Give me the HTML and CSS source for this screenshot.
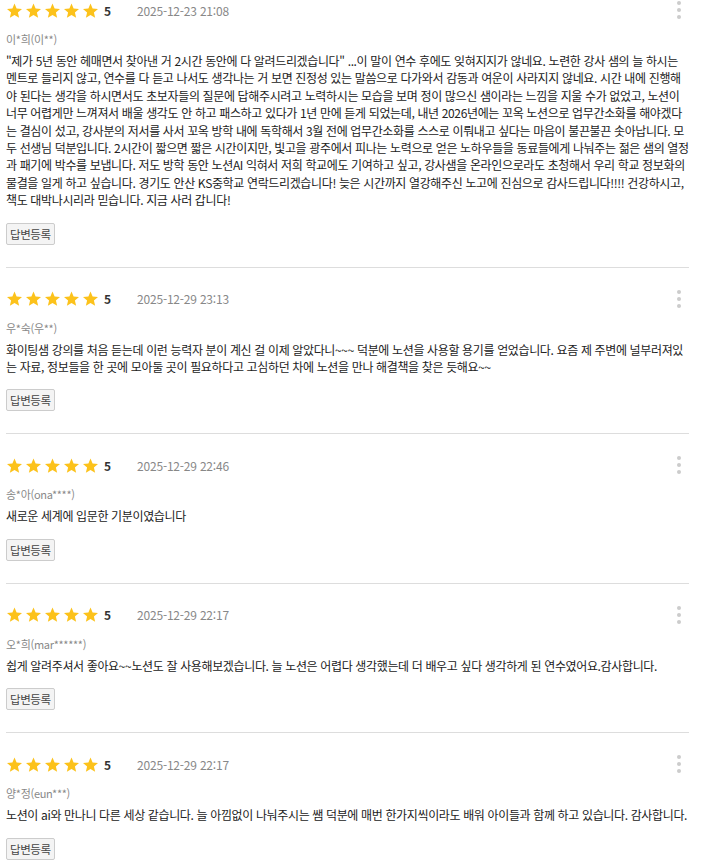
FILE: index.html
```html
<!DOCTYPE html>
<html lang="ko">
<head>
<meta charset="utf-8">
<title>수강후기</title>
<link rel="stylesheet" href="styles.css">
</head>
<body>
<svg width="0" height="0" class="defs" aria-hidden="true">
  <defs>
    <symbol id="star" viewBox="2 1.6 20 19.6">
      <path d="M12 17.27L18.18 21l-1.64-7.03L22 9.24l-7.19-.61L12 2 9.19 8.63 2 9.24l5.46 4.73L5.82 21z"/>
    </symbol>
  </defs>
</svg>
<ul class="reviews">
  <li class="review">
    <div class="head">
      <span class="stars"><svg><use href="#star"/></svg><svg><use href="#star"/></svg><svg><use href="#star"/></svg><svg><use href="#star"/></svg><svg><use href="#star"/></svg></span>
      <span class="score">5</span>
      <span class="date">2025-12-23 21:08</span>
      <span class="kebab"><i></i><i></i><i></i></span>
    </div>
    <div class="name">이*희(이**)</div>
    <p class="text">"제가 5년 동안 헤매면서 찾아낸 거 2시간 동안에 다 알려드리겠습니다" ...이 말이 연수 후에도 잊혀지지가 않네요. 노련한 강사 샘의 늘 하시는 멘트로 들리지 않고, 연수를 다 듣고 나서도 생각나는 거 보면 진정성 있는 말씀으로 다가와서 감동과 여운이 사라지지 않네요. 시간 내에 진행해야 된다는 생각을 하시면서도 초보자들의 질문에 답해주시려고 노력하시는 모습을 보며 정이 많으신 샘이라는 느낌을 지울 수가 없었고, 노션이 너무 어렵게만 느껴져서 배울 생각도 안 하고 패스하고 있다가 1년 만에 듣게 되었는데, 내년 2026년에는 꼬옥 노션으로 업무간소화를 해야겠다는 결심이 섰고, 강사분의 저서를 사서 꼬옥 방학 내에 독학해서 3월 전에 업무간소화를 스스로 이뤄내고 싶다는 마음이 불끈불끈 솟아납니다. 모두 선생님 덕분입니다. 2시간이 짧으면 짧은 시간이지만, 빛고을 광주에서 피나는 노력으로 얻은 노하우들을 동료들에게 나눠주는 젊은 샘의 열정과 패기에 박수를 보냅니다. 저도 방학 동안 노션AI 익혀서 저희 학교에도 기여하고 싶고, 강사샘을 온라인으로라도 초청해서 우리 학교 정보화의 물결을 일게 하고 싶습니다. 경기도 안산 KS중학교 연락드리겠습니다! 늦은 시간까지 열강해주신 노고에 진심으로 감사드립니다!!!! 건강하시고, 책도 대박나시리라 믿습니다. 지금 사러 갑니다!</p>
    <button class="reply" type="button">답변등록</button>
  </li>
  <li class="review">
    <div class="head">
      <span class="stars"><svg><use href="#star"/></svg><svg><use href="#star"/></svg><svg><use href="#star"/></svg><svg><use href="#star"/></svg><svg><use href="#star"/></svg></span>
      <span class="score">5</span>
      <span class="date">2025-12-29 23:13</span>
      <span class="kebab"><i></i><i></i><i></i></span>
    </div>
    <div class="name">우*숙(우**)</div>
    <p class="text">화이팅샘 강의를 처음 듣는데 이런 능력자 분이 계신 걸 이제 알았다니~~~ 덕분에 노션을 사용할 용기를 얻었습니다. 요즘 제 주변에 널부러져있는 자료, 정보들을 한 곳에 모아둘 곳이 필요하다고 고심하던 차에 노션을 만나 해결책을 찾은 듯해요~~</p>
    <button class="reply" type="button">답변등록</button>
  </li>
  <li class="review">
    <div class="head">
      <span class="stars"><svg><use href="#star"/></svg><svg><use href="#star"/></svg><svg><use href="#star"/></svg><svg><use href="#star"/></svg><svg><use href="#star"/></svg></span>
      <span class="score">5</span>
      <span class="date">2025-12-29 22:46</span>
      <span class="kebab"><i></i><i></i><i></i></span>
    </div>
    <div class="name">송*아(ona****)</div>
    <p class="text">새로운 세계에 입문한 기분이였습니다</p>
    <button class="reply" type="button">답변등록</button>
  </li>
  <li class="review">
    <div class="head">
      <span class="stars"><svg><use href="#star"/></svg><svg><use href="#star"/></svg><svg><use href="#star"/></svg><svg><use href="#star"/></svg><svg><use href="#star"/></svg></span>
      <span class="score">5</span>
      <span class="date">2025-12-29 22:17</span>
      <span class="kebab"><i></i><i></i><i></i></span>
    </div>
    <div class="name">오*희(mar******)</div>
    <p class="text">쉽게 알려주셔서 좋아요~~노션도 잘 사용해보겠습니다. 늘 노션은 어렵다 생각했는데 더 배우고 싶다 생각하게 된 연수였어요.감사합니다.</p>
    <button class="reply" type="button">답변등록</button>
  </li>
  <li class="review">
    <div class="head">
      <span class="stars"><svg><use href="#star"/></svg><svg><use href="#star"/></svg><svg><use href="#star"/></svg><svg><use href="#star"/></svg><svg><use href="#star"/></svg></span>
      <span class="score">5</span>
      <span class="date">2025-12-29 22:17</span>
      <span class="kebab"><i></i><i></i><i></i></span>
    </div>
    <div class="name">양*정(eun***)</div>
    <p class="text">노션이 ai와 만나니 다른 세상 같습니다. 늘 아낌없이 나눠주시는 쌤 덕분에 매번 한가지씩이라도 배워 아이들과 함께 하고 있습니다. 감사합니다.</p>
    <button class="reply" type="button">답변등록</button>
  </li>
</ul>
</body>
</html>
```
FILE: styles.css
```css
html, body {
  margin: 0;
  padding: 0;
  background: #fff;
}
body {
  font-family: "Noto Sans CJK KR", "Noto Sans", sans-serif;
  font-size: 12px;
  color: #222;
}
.defs {
  position: absolute;
  width: 0;
  height: 0;
  overflow: hidden;
}
.reviews {
  list-style: none;
  margin: 0 0 0 6px;
  padding: 0;
  width: 683px;
}
.review {
  padding: 21px 0 22px;
  border-bottom: 1px solid #ddd;
}
.review:first-child {
  padding-top: 0;
}
.head {
  display: flex;
  align-items: center;
  height: 20px;
}
.stars {
  display: flex;
  gap: 4px;
  margin-left: 1px;
}
.stars svg {
  width: 15px;
  height: 15px;
  fill: #fcc21b;
  display: block;
}
.score {
  margin-left: 6px;
  font-weight: bold;
  color: #333;
  font-size: 12px;
}
.date {
  margin-left: 26px;
  color: #888;
  font-size: 12px;
  letter-spacing: -0.2px;
}
.kebab {
  margin-left: auto;
  margin-right: 8px;
  display: flex;
  flex-direction: column;
  gap: 3px;
}
.kebab i {
  display: block;
  width: 4px;
  height: 4px;
  border-radius: 50%;
  background: #ccc;
}
.name {
  margin-top: 10px;
  font-size: 11px;
  line-height: 18px;
  color: #888;
  letter-spacing: -0.3px;
}
.text {
  margin: 4px 0 0;
  line-height: 17.4px;
  color: #222;
  letter-spacing: -0.36px;
}
.reply {
  display: block;
  margin-top: 14px;
  height: 22px;
  padding: 0 3px;
  font-family: inherit;
  font-size: 11.5px;
  letter-spacing: -0.4px;
  color: #444;
  background: #f4f4f4;
  border: 1px solid #ccc;
  border-radius: 2px;
}
```
